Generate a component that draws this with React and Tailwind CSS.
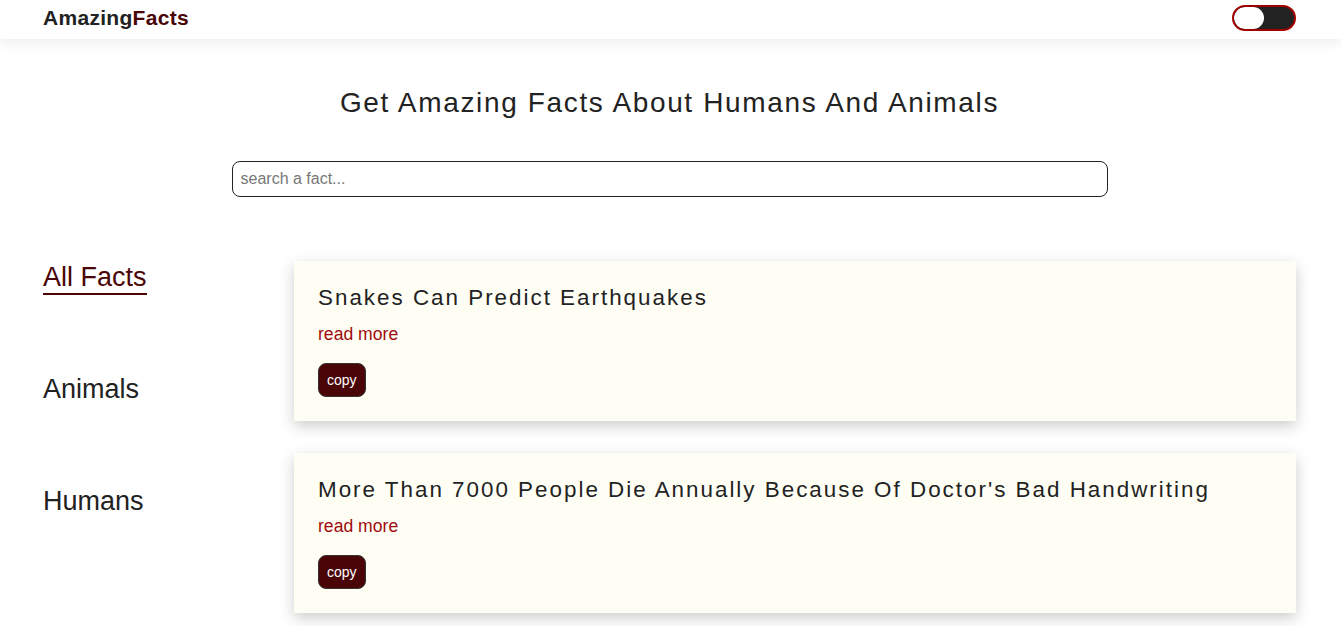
import React from 'react'

const facts = [
  { id: 1, title: "Snakes Can Predict Earthquakes" },
  { id: 2, title: "More Than 7000 People Die Annually Because Of Doctor's Bad Handwriting" },
]

const FactCard = ({ fact }) => {
  return (
    <div className="bg-[#fffef5] shadow-[0_5px_14px_rgba(0,0,0,0.2)] p-6">
      <h2 className="text-[22.4px] leading-[25px] tracking-[2px] text-[#222]">{fact.title}</h2>
      <p className="mt-[14px] text-[17.6px] leading-[20px] text-[#a00c0c]">read more</p>
      <button className="mt-[19px] bg-[#4a0606] border border-[#333] rounded-lg px-2 py-[8px] text-[14px] leading-[16px] text-white">
        copy
      </button>
    </div>
  )
}

export default function App() {
  return (
    <div className="min-h-screen bg-white font-['Liberation_Sans',Arial,sans-serif] text-[#222]">
      <header className="h-[39px] pb-[3px] flex items-center justify-between pl-[43px] pr-[46px] bg-white shadow-[0_4px_12px_rgba(0,0,0,0.07)]">
        <div className="text-[21px] font-bold tracking-[0.3px]">
          <span className="text-[#222]">Amazing</span>
          <span className="text-[#4a0606]">Facts</span>
        </div>
        <div className="w-16 h-[26px] rounded-full border-2 border-[#a30000] bg-[#222] flex items-center overflow-hidden">
          <div className="w-[30px] h-full bg-white rounded-full" />
        </div>
      </header>

      <main className="pl-[43px] pr-[46px]">
        <h1 className="mt-[48px] text-center text-[28px] leading-[32px] tracking-[1.65px] text-[#222]">
          Get Amazing Facts About Humans And Animals
        </h1>
        <div className="flex justify-center mt-[42px]">
          <input
            type="text"
            placeholder="search a fact..."
            className="w-[876px] h-9 border border-[#222] rounded-lg px-2 text-[16px] outline-none placeholder:text-[#777]"
          />
        </div>

        <div className="flex mt-16">
          <nav className="w-[251px] shrink-0 pt-px flex flex-col items-start gap-[79px]">
            <a className="text-[27px] leading-[31px] text-[#4a0606] border-b-2 border-[#4a0606]">All Facts</a>
            <a className="text-[27px] leading-[31px] text-[#222] border-b-2 border-transparent">Animals</a>
            <a className="text-[27px] leading-[31px] text-[#222] border-b-2 border-transparent">Humans</a>
          </nav>
          <div className="flex-1 flex flex-col gap-8">
            {facts.map((fact) => (
              <FactCard key={fact.id} fact={fact} />
            ))}
          </div>
        </div>
      </main>
    </div>
  )
}
